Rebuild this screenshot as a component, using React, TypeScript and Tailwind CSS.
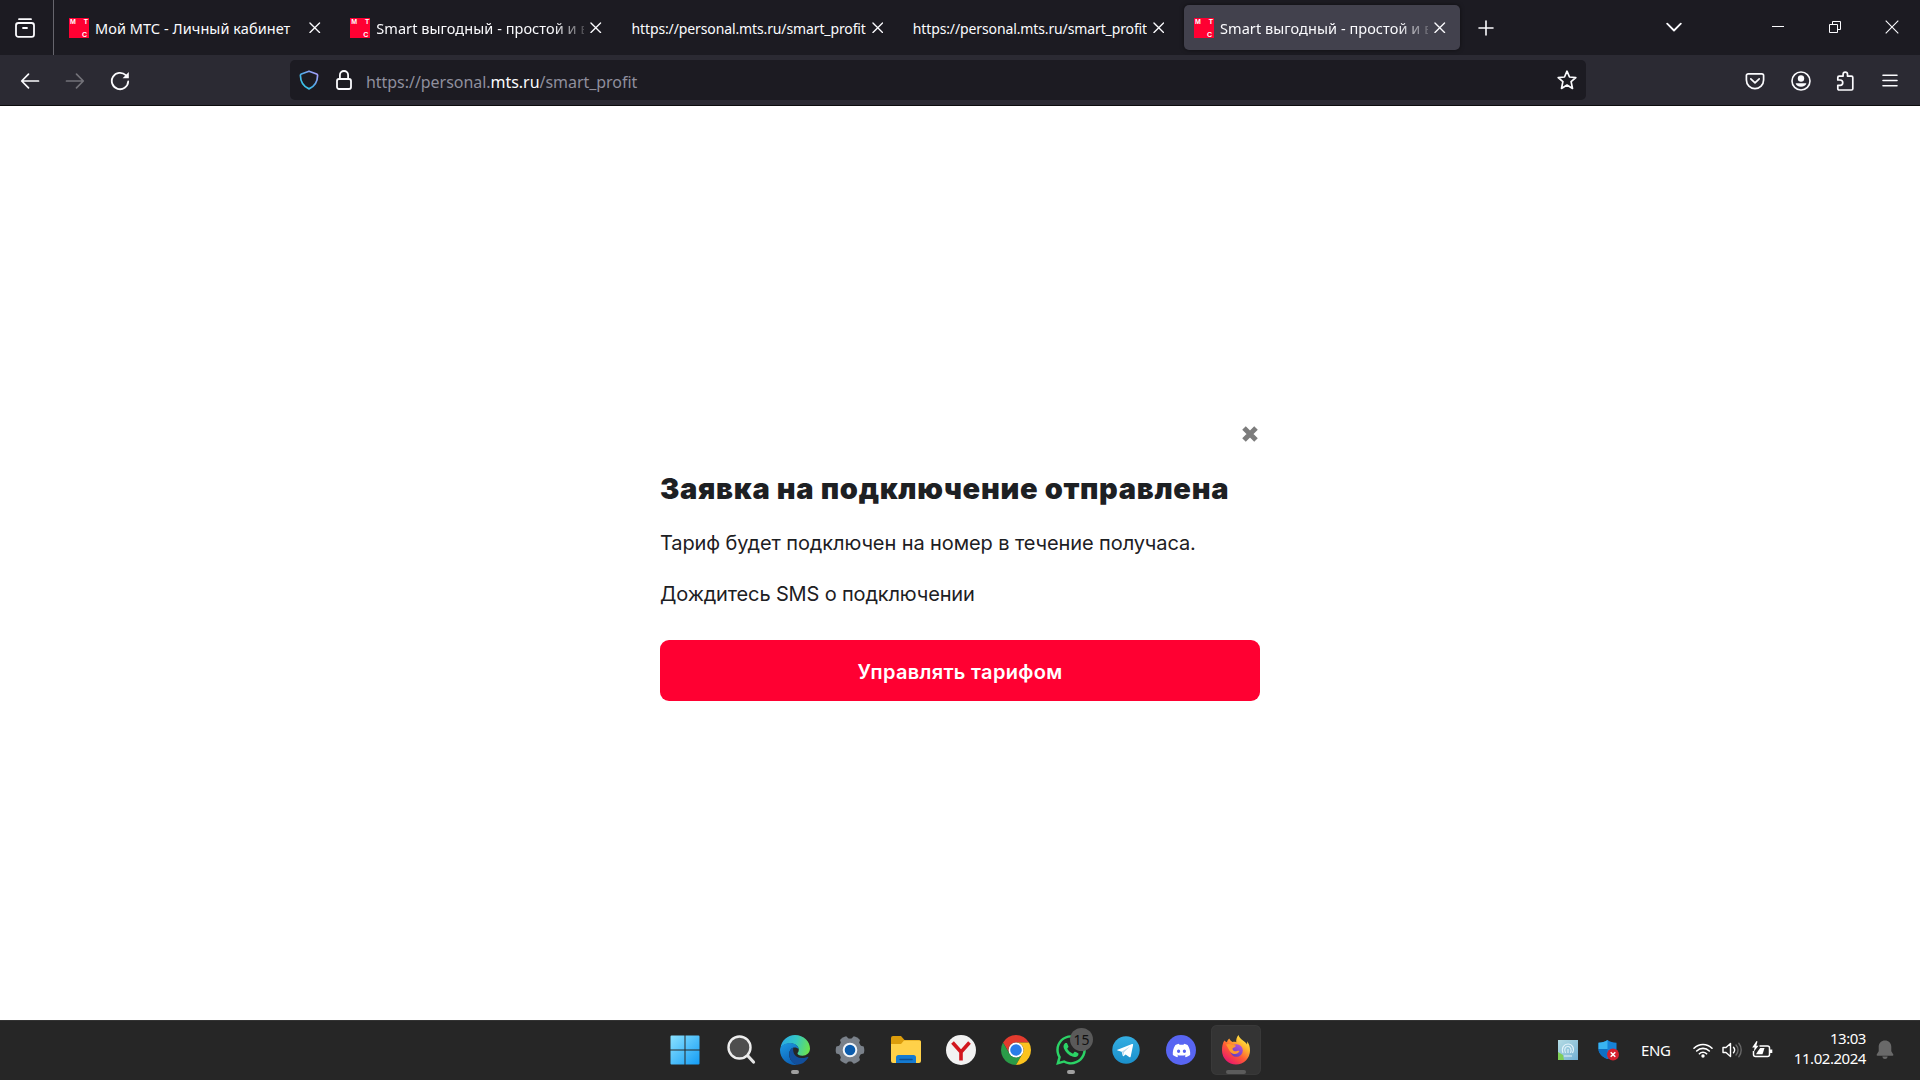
import type { ReactNode } from "react";
import { FaDiscord, FaWhatsapp } from "react-icons/fa6";

type Tab = {
  title: string;
  favicon?: boolean;
  active?: boolean;
};

const tabs: Tab[] = [
  { title: "Мой МТС - Личный кабинет", favicon: true },
  { title: "Smart выгодный - простой и в", favicon: true },
  { title: "https://personal.mts.ru/smart_profit" },
  { title: "https://personal.mts.ru/smart_profit" },
  { title: "Smart выгодный - простой и в", favicon: true, active: true },
];

function Favicon() {
  return (
    <span className="mr-1.5 grid size-5 shrink-0 grid-cols-2 grid-rows-2 bg-[#ff0032] px-px font-['Liberation_Sans'] text-[7px] leading-[8px] font-bold text-white">
      <span>М</span>
      <span className="text-right">Т</span>
      <span />
      <span className="pt-[3px] pr-px text-right leading-[7px]">С</span>
    </span>
  );
}

function CrossIcon({ className }: { className?: string }) {
  return (
    <svg viewBox="0 0 12 12" className={className} fill="none" stroke="currentColor" strokeWidth="1.4" strokeLinecap="round">
      <path d="M1 1l10 10M11 1L1 11" />
    </svg>
  );
}

function BrowserTab({ title, favicon, active }: Tab) {
  const faded = title.startsWith("Smart");
  return (
    <div
      className={`flex h-[45px] w-[276px] shrink-0 items-center rounded-[5px] pl-2.5 ${
        active ? "bg-[#42414d] shadow-[0_0_4px_rgba(0,0,0,0.5)]" : ""
      }`}
    >
      {favicon && <Favicon />}
      <span
        className={`min-w-0 flex-1 overflow-hidden whitespace-nowrap text-[#fbfbfe] ${
          favicon ? "pt-[3px] text-[14.5px] tracking-[0.06px]" : "pt-px text-[14px] tracking-[-0.12px]"
        } ${faded ? "[mask-image:linear-gradient(to_right,black_85%,transparent_104%)]" : ""}`}
      >
        {title}
      </span>
      <CrossIcon className="mr-[14.5px] ml-1.5 size-[11.5px] shrink-0 text-[#fbfbfe]" />
    </div>
  );
}

function TabStrip() {
  return (
    <div className="flex h-[55px] bg-[#1c1b22] text-[#fbfbfe]">
      <div className="flex w-[54px] items-center border-r border-[#66656d] pl-[15px]">
        <svg viewBox="0 0 20 20" className="size-5" fill="none" stroke="currentColor" strokeWidth="1.8" strokeLinecap="round">
          <path d="M4 1.2h12" />
          <rect x="1" y="5" width="18" height="13.8" rx="2.4" />
          <path d="M8 10h4" />
        </svg>
      </div>
      <div className="flex gap-[5.25px] pt-[5px] pl-[5px]">
        {tabs.map((tab, i) => (
          <BrowserTab key={i} {...tab} />
        ))}
      </div>
      <svg viewBox="0 0 16 16" className="mt-5 ml-[18px] size-4" fill="none" stroke="currentColor" strokeWidth="1.6" strokeLinecap="round">
        <path d="M8 1v14M1 8h14" />
      </svg>
      <div className="ml-auto flex items-start pr-[21px]">
        <svg viewBox="0 0 16 10" className="mt-[21.5px] h-2.5 w-4" fill="none" stroke="currentColor" strokeWidth="1.8" strokeLinecap="round" strokeLinejoin="round">
          <path d="M1.2 1.7L8 8.5l6.8-6.8" />
        </svg>
        <svg viewBox="0 0 12 12" className="mt-[20px] ml-[90px] size-3" fill="none" stroke="currentColor">
          <path d="M0 6.5h12" />
        </svg>
        <svg viewBox="0 0 12 12" className="mt-[21px] ml-[45px] size-3" fill="none" stroke="currentColor">
          <path d="M.5 3.5h8v8h-8zM3.5 3.5v-3h8v8h-3" />
        </svg>
        <svg viewBox="0 0 14 14" className="mt-5 ml-[44px] size-3.5" fill="none" stroke="currentColor" strokeWidth="1.1">
          <path d="M.7.7l12.6 12.6M13.3.7L.7 13.3" />
        </svg>
      </div>
    </div>
  );
}

function AddressBar() {
  return (
    <div className="flex h-10 w-[1296px] items-center rounded-[5px] bg-[#1c1b22] px-[9px]">
      <svg viewBox="0 0 20 20" className="size-5" fill="none" strokeWidth="1.7" strokeLinejoin="round">
        <defs>
          <linearGradient id="shield" x1="1" y1="0" x2="0" y2="1">
            <stop offset="0" stopColor="#b79cff" />
            <stop offset="0.5" stopColor="#52a8e8" />
            <stop offset="1" stopColor="#2ad4e8" />
          </linearGradient>
        </defs>
        <path d="M10 1.2L17.6 4c.8.3 1 .8 1 1.5C18.5 12 15 16.7 10 18.9 5 16.7 1.5 12 1.4 5.5c0-.7.2-1.2 1-1.5z" stroke="url(#shield)" />
      </svg>
      <svg viewBox="0 0 16 20" className="ml-[17px] h-5 w-4 text-[#fbfbfe]" fill="none" stroke="currentColor" strokeWidth="1.8">
        <rect x="1" y="9" width="14" height="10" rx="2" />
        <path d="M3.9 9V5.1a4.1 4.1 0 0 1 8.2 0V9" />
      </svg>
      <span className="ml-3.5 pt-[3px] text-[16px] tracking-[-0.04px] whitespace-nowrap text-[#8f8f9d]">
        https://personal.<span className="text-[#fbfbfe]">mts.ru</span>/smart_profit
      </span>
      <svg viewBox="0 0 20 20" className="ml-auto size-5 text-[#fbfbfe]" fill="none" stroke="currentColor" strokeWidth="1.7" strokeLinejoin="round">
        <path d="M10 1.2l2.5 5.8 6.3.6-4.7 4.1 1.4 6.7-5.5-3.3-5.5 3.3 1.4-6.7L1.2 7.6 7.5 7z" />
      </svg>
    </div>
  );
}

function Toolbar() {
  return (
    <div className="flex h-[51px] items-center border-b border-[#0c0c0d] bg-[#2b2a33] text-[#fbfbfe]">
      <div className="flex w-[290px] items-center gap-[25px] pt-px pl-5">
        <svg viewBox="0 0 20 20" className="size-5" fill="none" stroke="currentColor" strokeWidth="1.7" strokeLinecap="round" strokeLinejoin="round">
          <path d="M18.5 10H2M8.5 3.2L1.7 10l6.8 6.8" />
        </svg>
        <svg viewBox="0 0 20 20" className="size-5 text-[#737279]" fill="none" stroke="currentColor" strokeWidth="1.7" strokeLinecap="round" strokeLinejoin="round">
          <path d="M1.5 10H18M11.5 3.2l6.8 6.8-6.8 6.8" />
        </svg>
        <svg viewBox="0 0 20 20" className="size-5" fill="none" stroke="currentColor" strokeWidth="1.8" strokeLinecap="round">
          <path d="M15.8 4.2A8.2 8.2 0 1 0 18.2 10.5" />
          <path d="M18.8 1v6.2h-6.2z" fill="currentColor" stroke="none" />
        </svg>
      </div>
      <AddressBar />
      <div className="ml-auto flex items-center gap-[25px] pt-px pr-5">
        <svg viewBox="0 0 20 20" className="size-5" fill="none" stroke="currentColor" strokeWidth="1.7" strokeLinecap="round" strokeLinejoin="round">
          <path d="M3.2 2.8h13.6A1.8 1.8 0 0 1 18.6 4.6V9a8.6 8.6 0 0 1-17.2 0V4.6A1.8 1.8 0 0 1 3.2 2.8z" />
          <path d="M5.8 7.8L10 11.9l4.2-4.1" />
        </svg>
        <svg viewBox="0 0 20 20" className="ml-px -mr-px size-5" fill="none" stroke="currentColor" strokeWidth="1.6">
          <circle cx="10" cy="10" r="9" />
          <circle cx="10" cy="7.5" r="3.2" fill="currentColor" stroke="none" />
          <path d="M4.6 12.3h10.8c-.5 2-2.6 3.5-5.4 3.5s-4.9-1.5-5.4-3.5z" fill="currentColor" stroke="none" />
        </svg>
        <svg viewBox="0 0 20 20" className="size-5" fill="none" stroke="currentColor" strokeWidth="1.7" strokeLinejoin="round">
          <path d="M2.8 9V6.4c0-.8.5-1.3 1.3-1.3h4V3.3a2.2 2.2 0 0 1 4.4 0v1.8h4c.8 0 1.3.5 1.3 1.3v11.3c0 .8-.5 1.3-1.3 1.3H4.1c-.8 0-1.3-.5-1.3-1.3v-3.4h2.3a2.6 2.6 0 0 0 0-5.3z" />
        </svg>
        <svg viewBox="0 0 20 20" className="size-5" fill="none" stroke="currentColor" strokeWidth="1.6" strokeLinecap="round">
          <path d="M3 4.2h14M3 9.5h14M3 14.8h14" />
        </svg>
      </div>
    </div>
  );
}

function TariffDialog() {
  return (
    <main className="flex flex-1 justify-center bg-white font-[Inter] text-[#1d2023]">
      <div className="w-[600px] pt-[320px]">
        <div className="flex justify-end">
          <svg viewBox="0 0 16 16" className="mr-0.5 size-4" fill="none" stroke="#7c7c7c" strokeWidth="5">
            <path d="M2 2l12 12M14 2L2 14" />
          </svg>
        </div>
        <h1 className="mt-[27px] text-[29px] leading-10 font-black tracking-[0.68px] whitespace-nowrap">
          Заявка на подключение отправлена
        </h1>
        <p className="mt-[20px] text-[20px] leading-7 tracking-[-0.1px] whitespace-nowrap">
          Тариф будет подключен на номер в течение получаса.
        </p>
        <p className="mt-[23px] text-[20px] leading-7 tracking-[-0.15px] whitespace-nowrap">Дождитесь SMS о подключении</p>
        <button className="mt-[32px] flex h-[61px] w-full items-center justify-center rounded-[9px] bg-[#ff0032] pt-0.5 text-[20px] font-semibold tracking-[0.32px] text-white">
          Управлять тарифом
        </button>
      </div>
    </main>
  );
}

function StartIcon() {
  return (
    <svg viewBox="0 0 30 30" className="size-[30px]">
      <defs>
        <linearGradient id="win" x1="0" y1="0" x2="1" y2="1">
          <stop offset="0" stopColor="#8be2ff" />
          <stop offset="1" stopColor="#139cf5" />
        </linearGradient>
      </defs>
      <path d="M1.5.5h13v14h-14v-13a1 1 0 0 1 1-1zM15.5.5h13a1 1 0 0 1 1 1v13h-14zM.5 15.5h14v14h-13a1 1 0 0 1-1-1zM15.5 15.5h14v13a1 1 0 0 1-1 1h-13z" fill="url(#win)" />
    </svg>
  );
}

function SearchIcon() {
  return (
    <svg viewBox="0 0 30 30" className="ml-[3px] size-[30px] shrink-0" fill="none">
      <path d="M20 20l6.5 7" stroke="#e4e4e4" strokeWidth="3.2" strokeLinecap="round" />
      <circle cx="12.5" cy="12.5" r="11" fill="#4e4e4e" stroke="#ededed" strokeWidth="2.4" />
    </svg>
  );
}

function EdgeIcon() {
  return (
    <svg viewBox="0 0 30 30" className="size-[30px]">
      <defs>
        <linearGradient id="edge-top" x1="0" y1="0.3" x2="1" y2="0.5">
          <stop offset="0" stopColor="#2aa9e6" />
          <stop offset="0.5" stopColor="#34c7c4" />
          <stop offset="1" stopColor="#6be24f" />
        </linearGradient>
        <linearGradient id="edge-left" x1="0" y1="0" x2="0.5" y2="1">
          <stop offset="0" stopColor="#1d9ae3" />
          <stop offset="1" stopColor="#0d62b7" />
        </linearGradient>
      </defs>
      <path d="M.5 13C1.5 5.5 7.5 0 15 0c9 0 15 6.5 15 13.5 0 4.5-3.5 7.2-7.5 7.2-3.2 0-5-1.2-5-2.3 0-.8 1.3-1.3 1.3-3.7 0-3.5-3.6-6.2-8-6.2C5.5 8.5 2 10.5.5 13z" fill="url(#edge-top)" />
      <path d="M0 15C0 11 4.5 8 10 8c4.8 0 8.5 3 8.7 6.3-1-1.3-2.3-1.9-4-1.9-3 0-5.5 2.7-5.5 7 0 4.6 3.2 8.8 8.2 10.4C8.5 31.2 0 24.5 0 15z" fill="url(#edge-left)" />
      <path d="M9.2 19c0-3.5 1.8-6 4.3-6.6-1 2.3-.4 10.6 8.5 10.6 3 0 4.8-.8 5.8-1.3.5-.2.8.2.5.7A15 15 0 0 1 17.4 29.8C12.4 28.8 9.2 24.5 9.2 19z" fill="#124f9c" />
    </svg>
  );
}

function SettingsIcon() {
  return (
    <svg viewBox="0 0 30 30" className="size-[30px]">
      <g fill="#7a818a">
        <circle cx="15" cy="15" r="11.5" />
        {[30, 90, 150, 210, 270, 330].map((angle) => (
          <path key={angle} d="M10.2 6l1.2-4.7c1.8-.8 5.4-.8 7.2 0L19.8 6z" transform={`rotate(${angle} 15 15)`} />
        ))}
      </g>
      <circle cx="15" cy="15" r="6.3" fill="#0b5cad" stroke="#f1f5f9" strokeWidth="2" />
    </svg>
  );
}

function FolderIcon() {
  return (
    <svg viewBox="0 0 30 30" className="size-[30px]">
      <path d="M0 3a2 2 0 0 1 2-2h8l3.5 4H28a2 2 0 0 1 2 2v4H0z" fill="#dc9d0c" />
      <path d="M0 9h10l3-3.5h15.5A1.5 1.5 0 0 1 30 7v19a2 2 0 0 1-2 2H2a2 2 0 0 1-2-2z" fill="#ffd149" />
      <path d="M5 28v-5.5A2.5 2.5 0 0 1 7.5 20h15a2.5 2.5 0 0 1 2.5 2.5V28z" fill="#147ad1" />
      <path d="M9 24.5h12" stroke="#0b4f94" strokeWidth="1.5" strokeLinecap="round" />
    </svg>
  );
}

function YandexIcon() {
  return (
    <svg viewBox="0 0 30 30" className="size-[30px]">
      <circle cx="15" cy="15" r="15" fill="#f2f2f2" />
      <path d="M6.5 7.5L15 17v8.5M23.5 7.5L15 17" fill="none" stroke="#d2161e" strokeWidth="3.6" />
    </svg>
  );
}

function ChromeIcon() {
  return (
    <svg viewBox="0 0 48 48" className="size-[30px]">
      <path d="M24 12h20.78A24 24 0 0 0 3.22 12L13.6 30A12 12 0 0 1 24 12z" fill="#e33b2e" />
      <path d="M13.6 30L3.22 12A24 24 0 0 0 24 48l10.39-18a12 12 0 0 1-20.79 0z" fill="#2a9b48" />
      <path d="M34.39 30L24 48a24 24 0 0 0 20.78-36H24a12 12 0 0 1 10.39 18z" fill="#fcc31e" />
      <circle cx="24" cy="24" r="12" fill="#fff" />
      <circle cx="24" cy="24" r="9.3" fill="#2a7de9" />
    </svg>
  );
}

function TelegramIcon() {
  return (
    <svg viewBox="0 0 28 28" className="size-7">
      <defs>
        <linearGradient id="tg" x1="0" y1="0" x2="0" y2="1">
          <stop offset="0" stopColor="#34aee2" />
          <stop offset="1" stopColor="#1b90cb" />
        </linearGradient>
      </defs>
      <circle cx="14" cy="14" r="13.7" fill="url(#tg)" />
      <path d="M5.5 13.8L20 8c.8-.3 1.3.2 1.1 1.1l-2.4 11.3c-.2.9-.8 1.1-1.5.7l-3.6-2.7-1.8 1.7c-.6.5-1 .3-1.1-.5l-1-3.9-4.1-1.3c-.6-.2-.6-.5-.1-.6z" fill="#fff" />
      <path d="M10 15.6l8.2-5.3-6.2 6-.5 3.5z" fill="#b9d9ec" />
    </svg>
  );
}

function FirefoxIcon() {
  return (
    <svg viewBox="0 0 30 30" className="size-[30px]">
      <defs>
        <linearGradient id="ff-body" x1="0.85" y1="0.05" x2="0.2" y2="0.95">
          <stop offset="0" stopColor="#fff04a" />
          <stop offset="0.3" stopColor="#ffb52e" />
          <stop offset="0.6" stopColor="#ff5b35" />
          <stop offset="1" stopColor="#e8156f" />
        </linearGradient>
        <linearGradient id="ff-core" x1="0.8" y1="0" x2="0.2" y2="1">
          <stop offset="0" stopColor="#b753d8" />
          <stop offset="1" stopColor="#5a3fc0" />
        </linearGradient>
      </defs>
      <path d="M17.5 0c-2 2.5-2.6 5-2.2 7.2-1.3-.5-2.6-.5-3.8-.2C10 6.3 8.9 5 8.3 3.6 7 4.5 6.3 5.8 6 7.3 5 7 4 6.4 3.3 5.5 1.5 8.3 1 12 1 15.5a14 14 0 0 0 28 0c0-3.7-1-6.8-3-9.2.3 1.4.2 2.4 0 3.2C24.5 6 18.8 4.8 17.5 0z" fill="url(#ff-body)" />
      <circle cx="15.5" cy="15.5" r="6.3" fill="url(#ff-core)" />
      <path d="M5 9.5c2-1 4.8-.7 6.5.5 1.3-.3 2.6 0 3.6.7-.5 1.3-2.3 1.7-3.4 2.4-.5 1.6.3 2.9 1.9 3.2 2 .4 3.1-1.2 4.9-.3-1 2.4-3.4 3.4-5.6 2.9C8.5 18.1 8 14 5 9.5z" fill="#ff9a2d" />
    </svg>
  );
}

function TaskItem({ children, indicator, active }: { children: ReactNode; indicator?: "dot" | "bar"; active?: boolean }) {
  return (
    <div
      className={`flex h-[50px] w-[50px] flex-col items-center rounded-md pt-2.5 ${
        active ? "bg-[#343434] ring-1 ring-[#393939] ring-inset" : ""
      }`}
    >
      <div className="relative flex size-[30px] items-center justify-center">{children}</div>
      {indicator === "dot" && <span className="mt-[5px] h-1 w-2 rounded-full bg-[#a0a0a0]" />}
      {indicator === "bar" && <span className="mt-[5px] h-1 w-5 rounded-full bg-[#5c5c5c]" />}
    </div>
  );
}

function Tray() {
  return (
    <div className="flex w-[362px] items-center pb-px text-white">
      <svg viewBox="0 0 20 20" className="size-5" fill="none">
        <defs>
          <linearGradient id="tray" x1="0" y1="0" x2="1" y2="1">
            <stop offset="0" stopColor="#b5dce4" />
            <stop offset="1" stopColor="#72afd3" />
          </linearGradient>
        </defs>
        <path d="M0 0h20v20H0z" fill="url(#tray)" />
        <path d="M0 12l5 3 1 5H0z" fill="#7fcf56" />
        <path d="M5 13c-2-5 1-9 5-9s7 4 4.5 9M7.5 13c-2-4 0-6.5 2.5-6.5s4 3 2.5 6.5M10 9v4M6 16h8" stroke="#e3f3fa" strokeWidth="1.1" />
      </svg>
      <svg viewBox="0 0 22 22" className="ml-5 size-[22px]">
        <path d="M9.5 1C12 3 15 3.7 18.5 3.7V10c0 4.5-4 8-9 10-5-2-9-5.5-9-10V3.7C4 3.7 7 3 9.5 1z" fill="#1683d8" />
        <path d="M9.5 1C7 3 4 3.7.5 3.7V10h9z" fill="#39b4f2" />
        <path d="M.5 10h9v10c-5-2-9-5.5-9-10z" fill="#0f6fc3" />
        <circle cx="15" cy="15.5" r="6" fill="#d5202e" />
        <path d="M12.7 13.2l4.6 4.6M17.3 13.2l-4.6 4.6" stroke="#fff" strokeWidth="1.5" />
      </svg>
      <span className="ml-[21px] w-[31px] text-[15px] tracking-[-0.4px]">ENG</span>
      <svg viewBox="0 0 20 16" className="ml-[21px] h-4 w-5" fill="none" stroke="currentColor" strokeWidth="1.6" strokeLinecap="round">
        <path d="M1 6.2c5-5 13-5 18 0M3.7 9c3.5-3.5 9.1-3.5 12.6 0M6.4 11.8c2-2 5.2-2 7.2 0" />
        <circle cx="10" cy="14" r="1.7" fill="currentColor" stroke="none" />
      </svg>
      <svg viewBox="0 0 20 16" className="ml-[9px] h-4 w-5" fill="none" stroke="currentColor" strokeWidth="1.4" strokeLinecap="round" strokeLinejoin="round">
        <path d="M1 5.5h3L8.5 1.5v13L4 10.5H1z" />
        <path d="M11.5 5.2c1.3 1.6 1.3 4 0 5.6" />
        <path d="M14 3c2.7 2.9 2.7 7.1 0 10M16.8 1.3c3.2 3.9 3.2 9.5 0 13.4" stroke="#686868" />
      </svg>
      <svg viewBox="0 0 21 17" className="mb-[2px] ml-[10px] h-[17px] w-[21px]" fill="none" stroke="currentColor" strokeWidth="1.5">
        <path d="M7.5 5H15.5a2 2 0 0 1 2 2v6.5a2 2 0 0 1-2 2H3.5a2 2 0 0 1-2-2V10" />
        <path d="M8.2 7H12.500L10.500 13.300H4l2-3.300z" fill="currentColor" stroke="none" />
        <path d="M18 8.500h2.300v3.500H18z" fill="currentColor" stroke="none" />
        <path d="M4.500 0L.2 6.500h2.500L1.500 11l5-6.300H4.300L5.500.5z" fill="currentColor" stroke="none" />
      </svg>
      <div className="mb-1 ml-[13px] w-20 text-right text-[15px] leading-5 tracking-[-0.45px]">
        <div>13:03</div>
        <div>11.02.2024</div>
      </div>
      <svg viewBox="0 0 18 20" className="ml-2.5 h-5 w-[18px]" fill="#696969">
        <path d="M9 .5c3.6 0 6.3 2.6 6.3 6.2v4.6l2 3.3c.3.7 0 1.1-.7 1.1H1.4c-.7 0-1-.4-.7-1.1l2-3.3V6.7C2.7 3.1 5.4.5 9 .5zM6.3 16.5h5.4c-.3 1.7-1.4 2.5-2.7 2.5s-2.4-.8-2.7-2.5z" />
      </svg>
    </div>
  );
}

function Taskbar() {
  return (
    <footer className="flex h-[60px] justify-between border-t border-[#333] bg-[#262626] pl-[660px]">
      <div className="flex gap-[5.15px] pt-1">
        <TaskItem>
          <StartIcon />
        </TaskItem>
        <TaskItem>
          <SearchIcon />
        </TaskItem>
        <TaskItem indicator="dot">
          <EdgeIcon />
        </TaskItem>
        <TaskItem>
          <SettingsIcon />
        </TaskItem>
        <TaskItem>
          <FolderIcon />
        </TaskItem>
        <TaskItem>
          <YandexIcon />
        </TaskItem>
        <TaskItem>
          <ChromeIcon />
        </TaskItem>
        <TaskItem indicator="dot">
          <FaWhatsapp className="size-[34px] shrink-0 text-[#2bd366]" />
          <span className="absolute -top-[7px] left-[14px] flex size-[23px] items-center justify-center rounded-full bg-[#5a5a5a] text-[14px] text-[#111]">
            15
          </span>
        </TaskItem>
        <TaskItem>
          <TelegramIcon />
        </TaskItem>
        <TaskItem>
          <span className="flex size-[30px] items-center justify-center rounded-full bg-[#5865f2]">
            <FaDiscord className="size-[19px] text-white" />
          </span>
        </TaskItem>
        <TaskItem active indicator="bar">
          <FirefoxIcon />
        </TaskItem>
      </div>
      <Tray />
    </footer>
  );
}

export default function App() {
  return (
    <div className="flex h-[1080px] w-[1920px] flex-col overflow-hidden font-['Noto_Sans',sans-serif]">
      <TabStrip />
      <Toolbar />
      <TariffDialog />
      <Taskbar />
    </div>
  );
}
